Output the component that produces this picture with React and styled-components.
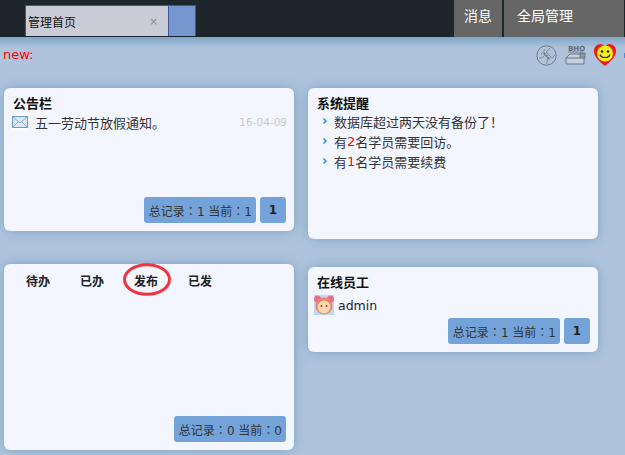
import styled, { createGlobalStyle } from "styled-components";

const GlobalStyle = createGlobalStyle`
  html, body {
    margin: 0;
    padding: 0;
    width: 625px;
    height: 455px;
    overflow: hidden;
    background: #afc4dc;
    font-family: "DejaVu Sans", "Noto Sans CJK SC", sans-serif;
    font-size: 13px;
    color: #222;
  }
`;

const Header = styled.div`
  height: 37px;
  background: #1d272b;
  display: flex;
  justify-content: space-between;
  align-items: flex-start;
`;

const TabStrip = styled.div`
  display: flex;
  height: 31px;
  width: 171px;
  margin: 5px 0 0 25px;
  box-sizing: border-box;
  border: 1px solid #44549a;
  border-bottom: 0;
`;

const ActiveTab = styled.div`
  flex: 1;
  background: #c9ccd6;
  border-right: 1px solid #44549a;
  display: flex;
  align-items: center;
  justify-content: space-between;
  padding: 0 10px 0 2px;
  color: #111;
  font-size: 12px;
`;

const TabClose = styled.span`
  color: #8a8a8a;
  font-size: 10px;
`;

const SpareTab = styled.div`
  width: 26px;
  background: #7596cf;
`;

const Menu = styled.div`
  display: flex;
  gap: 2px;
  height: 37px;
  margin-right: 1px;
`;

const MenuItem = styled.div`
  background: #666;
  color: #fff;
  font-size: 14px;
  height: 37px;
  line-height: 33px;
  box-sizing: border-box;
  padding: 0 ${(p) => p.$pad}px;
  width: ${(p) => p.$width}px;
`;

const Page = styled.div`
  height: 418px;
  box-sizing: border-box;
  background: linear-gradient(#7fa6c6 0, #afc4dc 11px);
`;

const Notice = styled.div`
  height: 51px;
  display: flex;
  justify-content: space-between;
  align-items: flex-start;
  padding-left: 3px;
`;

const NewLabel = styled.div`
  color: #f00;
  font-size: 13px;
  line-height: 16px;
  margin-top: 10px;
`;

const IconRow = styled.div`
  display: flex;
  align-items: center;
  gap: 8px;
  margin-top: 7px;
  margin-right: -2px;
`;

const Dot = styled.span`
  width: 3px;
  height: 5px;
  background: #3f8fe8;
`;

const Columns = styled.div`
  display: grid;
  grid-template-columns: 290px 290px;
  column-gap: 14px;
  padding-left: 4px;
`;

const Column = styled.div`
  display: flex;
  flex-direction: column;
  gap: ${(p) => p.$gap}px;
`;

const Card = styled.div`
  height: ${(p) => p.$height}px;
  box-sizing: border-box;
  background: #f3f6ff;
  border-radius: 6px;
  box-shadow: 0 0 12px rgba(90, 135, 175, 0.55);
  padding: 7px 8px 8px 9px;
  display: flex;
  flex-direction: column;
`;

const CardTitle = styled.div`
  font-weight: bold;
  font-size: 13px;
  line-height: 17px;
  color: #111;
`;

const MailRow = styled.div`
  display: flex;
  align-items: center;
  height: 20px;
`;

const MailIcon = styled.svg`
  margin: 0 7px 0 -2px;
  flex: none;
`;

const MailText = styled.div`
  flex: 1;
  font-size: 13px;
  color: #333;
`;

const DateText = styled.div`
  font-size: 10.5px;
  color: #c8c8c8;
  margin-right: -1px;
`;

const Footer = styled.div`
  margin-top: auto;
  display: flex;
  justify-content: flex-end;
  gap: 4px;
`;

const Total = styled.div`
  height: 26px;
  line-height: 27px;
  padding: 0 4px 0 5px;
  background: #74a3d9;
  border-radius: 3px;
  font-size: 12px;
  color: #333;
  white-space: nowrap;
`;

const Colon = styled.span`
  font-family: "Noto Sans CJK TC", sans-serif;
`;

const PageNum = styled.div`
  width: 26px;
  height: 26px;
  line-height: 27px;
  text-align: center;
  background: #74a3d9;
  border-radius: 3px;
  font-size: 12px;
  font-weight: bold;
  color: #222;
`;

const List = styled.ul`
  list-style: none;
  margin: -1px 0 0;
  padding: 0 0 0 6px;
`;

const ListItem = styled.li`
  display: flex;
  align-items: center;
  height: 20px;
  font-size: 13px;
  color: #333;
`;

const Arrow = styled.svg`
  margin-right: 7px;
  flex: none;
`;

const Red = styled.span`
  color: #f00;
`;

const Tabs = styled.div`
  display: flex;
  padding-left: 13px;
  margin-top: 3px;
  gap: 30px;
  position: relative;
`;

const TabLabel = styled.div`
  font-size: 12px;
  font-weight: bold;
  line-height: 17px;
  width: 24px;
  color: #222;
  white-space: nowrap;
`;

const HandCircle = styled.svg`
  position: absolute;
  left: 110px;
  top: -11px;
`;

const UserRow = styled.div`
  display: flex;
  align-items: center;
  height: 20px;
  margin: 4px 0 0 -3px;
  gap: 4px;
  font-size: 12.5px;
  color: #223;
`;

const ListArrow = () => (
  <Arrow width="4" height="6" viewBox="0 0 4 6" fill="none" stroke="#0f8cf0" strokeWidth="1.4">
    <path d="M0.500 0.500l2.500 2.500-2.500 2.500" />
  </Arrow>
);

const Summary = ({ total, current }) => (
  <Total>
    总记录<Colon>：</Colon>{total} 当前<Colon>：</Colon>{current}
  </Total>
);

const App = () => (
  <>
    <GlobalStyle />
    <Header>
      <TabStrip>
        <ActiveTab>
          管理首页
          <TabClose>×</TabClose>
        </ActiveTab>
        <SpareTab />
      </TabStrip>
      <Menu>
        <MenuItem $pad={10} $width={48}>消息</MenuItem>
        <MenuItem $pad={13} $width={120}>全局管理</MenuItem>
      </Menu>
    </Header>
    <Page>
      <Notice>
        <NewLabel>new:</NewLabel>
        <IconRow>
          <svg width="21" height="21" viewBox="0 0 21 21" fill="none" stroke="#6f7c88" strokeWidth="1">
            <circle cx="10.500" cy="10.500" r="9.700" />
            <path d="M5 9c2-1 3-3 4-5M3 13c3 0 5-1 6-3l3 3c-1 2-1 4-1 6M14 3c-1 2-3 3-4 4l6 6c1-1 2-2 3-3" strokeWidth="0.800" />
            <path d="M8 8l6 7" strokeWidth="2.200" strokeDasharray="2 1" />
          </svg>
          <svg width="21" height="20" viewBox="0 0 21 20" fill="none" stroke="#67727e" strokeWidth="1">
            <text x="3" y="6" fontSize="7" fontWeight="bold" fontFamily="DejaVu Sans" fill="#5f6a75" stroke="none">BHO</text>
            <path d="M3 7h15" strokeWidth="0.800" />
            <path d="M5 9h12v3h2v7H2a1 1 0 0 1-1-1v-5z" fill="#c5d0de" />
            <path d="M15 8h5v5h-5z" fill="#8996a6" />
            <path d="M1 13h14" />
          </svg>
          <svg width="22" height="22" viewBox="0 0 22 22">
            <path d="M11 22C5 17 0 13 0 7 0 3 3 0 6.500 0c2 0 3.500 1 4.500 2.500C12 1 13.500 0 15.500 0 19 0 22 3 22 7c0 6-5 10-11 15z" fill="#ee1c1c" />
            <circle cx="11" cy="9.500" r="8" fill="#f7ee1a" />
            <circle cx="8" cy="7.500" r="1.300" fill="#222" />
            <circle cx="14" cy="7.500" r="1.300" fill="#222" />
            <path d="M6 10.500c1 4 9 4 10 0" fill="none" stroke="#222" strokeWidth="1.200" />
          </svg>
          <Dot />
        </IconRow>
      </Notice>
      <Columns>
        <Column $gap={33}>
          <Card $height={143}>
            <CardTitle>公告栏</CardTitle>
            <MailRow>
              <MailIcon width="17" height="16" viewBox="0 0 17 16">
                <rect width="17" height="16" fill="#fff" />
                <rect x="1.500" y="2.500" width="15" height="11" fill="#dce8f6" stroke="#6d9ac9" />
                <path d="M2 3l7 6 7-6M2 13l5-5M16 13l-5-5" fill="none" stroke="#7ea6d0" />
              </MailIcon>
              <MailText>五一劳动节放假通知。</MailText>
              <DateText>16-04-09</DateText>
            </MailRow>
            <Footer>
              <Summary total={1} current={1} />
              <PageNum>1</PageNum>
            </Footer>
          </Card>
          <Card $height={186}>
            <Tabs>
              <TabLabel>待办</TabLabel>
              <TabLabel>已办</TabLabel>
              <TabLabel>发布</TabLabel>
              <TabLabel>已发</TabLabel>
              <HandCircle width="48" height="33" viewBox="0 0 48 33" fill="none">
                <ellipse cx="24" cy="16.500" rx="22.500" ry="14.800" stroke="#f0333c" strokeWidth="3" />
              </HandCircle>
            </Tabs>
            <Footer>
              <Summary total={0} current={0} />
            </Footer>
          </Card>
        </Column>
        <Column $gap={28}>
          <Card $height={151}>
            <CardTitle>系统提醒</CardTitle>
            <List>
              <ListItem><ListArrow />数据库超过两天没有备份了！</ListItem>
              <ListItem><ListArrow />有<Red>2</Red>名学员需要回访。</ListItem>
              <ListItem><ListArrow />有<Red>1</Red>名学员需要续费</ListItem>
            </List>
          </Card>
          <Card $height={85}>
            <CardTitle>在线员工</CardTitle>
            <UserRow>
              <svg width="20" height="20" viewBox="0 0 20 20">
                <rect width="20" height="20" fill="#bcd8f2" />
                <circle cx="3.500" cy="4" r="3.500" fill="#ea6f7f" />
                <circle cx="16.500" cy="4" r="3.500" fill="#ea6f7f" />
                <circle cx="10" cy="11" r="8.500" fill="#ee7f6f" />
                <circle cx="10" cy="12" r="6.500" fill="#fbd9a8" />
                <circle cx="7.500" cy="11" r="0.900" fill="#a24" />
                <circle cx="12.500" cy="11" r="0.900" fill="#a24" />
              </svg>
              admin
            </UserRow>
            <Footer>
              <Summary total={1} current={1} />
              <PageNum>1</PageNum>
            </Footer>
          </Card>
        </Column>
      </Columns>
    </Page>
  </>
);

export default App;
